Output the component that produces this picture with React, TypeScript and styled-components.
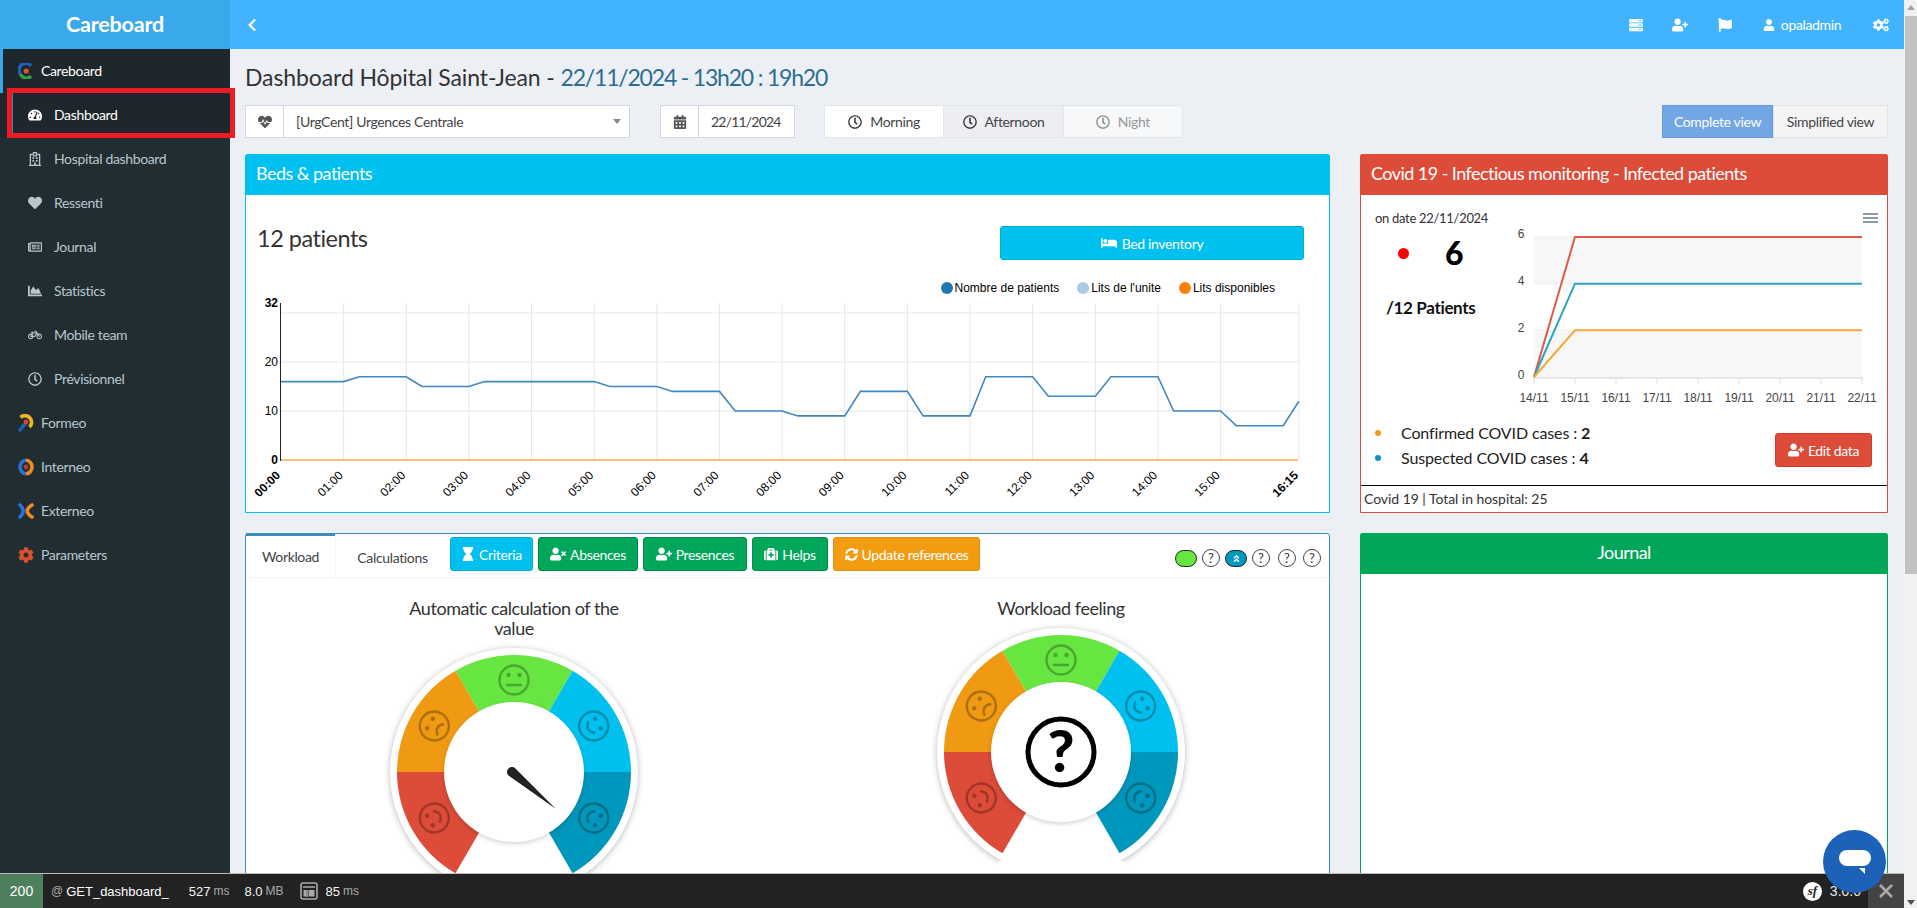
import React from "react";
import styled, { createGlobalStyle } from "styled-components";
import {
  FaAngleDoubleUp, FaBed, FaBicycle, FaCalendarAlt, FaChartArea, FaChevronLeft, FaCog, FaCogs, FaFlag,
  FaHeart, FaHeartbeat, FaHourglass, FaMedkit, FaRegClock, FaRegHospital, FaRegNewspaper,
  FaServer, FaSyncAlt, FaTachometerAlt, FaUser, FaUserPlus, FaUserTimes,
} from "react-icons/fa";

const SANS = `"Lato", "Noto Sans", sans-serif`;
const ARIAL = `"Liberation Sans", Arial, sans-serif`;

const Global = createGlobalStyle`
  html, body { margin: 0; padding: 0; height: 100%; overflow: hidden; }
  body { font-family: ${SANS}; font-size: 14px; color: #333; background: #ecf0f5; letter-spacing: -0.35px; }
  #root { height: 100%; }
  * { box-sizing: border-box; }
`;

const Page = styled.div`position: relative; display: flex; width: 100%; height: 908px; overflow: hidden;`;
const Viewport = styled.div`flex: 1; min-width: 0; display: flex; flex-direction: column;`;
const ScrollTrack = styled.div`width: 13px; background: #f1f1f1; display: flex; flex-direction: column; align-items: stretch; padding-top: 5px;`;
const ScrollArrow = styled.div<{ $down?: boolean }>`
  width: 0; height: 0; align-self: center; border-left: 4px solid transparent; border-right: 4px solid transparent;
  ${(p) => (p.$down ? "border-top: 5px solid #505050; margin-top: auto; margin-bottom: 3px;" : "border-bottom: 5px solid #a3a3a3;")}
`;
const ScrollThumb = styled.div`height: 558px; margin: 6px 0 0 1px; background: #c1c1c1;`;

const TopBar = styled.header`height: 49px; display: flex; background: #42b4ff; color: #fff; flex: none;`;
const Logo = styled.div`width: 230px; background: #3aa9ec; text-align: center; font-size: 21.5px; font-weight: 700; line-height: 49px; letter-spacing: -0.2px;`;
const Toggle = styled.div`width: 40px; display: flex; align-items: center; padding-left: 15px; font-size: 14px;`;
const TopActions = styled.div`margin-left: auto; display: flex; align-items: center; padding-right: 4px; font-size: 14px;`;
const TopAction = styled.span<{ $w: number }>`display: flex; align-items: center; justify-content: center; gap: 6px; width: ${(p) => p.$w}px; font-size: 14px;`;

const Body = styled.div`flex: 1; display: flex; min-height: 0;`;
const Sidebar = styled.nav`width: 230px; flex: none; background: #222d32; color: #b8c7ce;`;
const MenuRow = styled.div<{ $sub?: boolean; $active?: boolean; $brand?: boolean }>`
  height: 44px; display: flex; align-items: center; font-size: 14px; padding-bottom: 1px;
  padding-left: ${(p) => (p.$sub ? "28px" : "18px")};
  background: ${(p) => (p.$active ? "#1e282c" : "transparent")};
  color: ${(p) => (p.$active ? "#fff" : "#b8c7ce")};
  ${(p) => (p.$brand ? "border-left: 3px solid #3aa9ec; padding-left: 15px;" : "")}
  ${(p) => (p.$active && p.$sub ? "background: linear-gradient(to right, transparent 12px, #3c8dbc 12px, #3c8dbc 13px, transparent 13px), #1e282c;" : "")}
`;
const MenuIcon = styled.span<{ $sub?: boolean }>`
  width: ${(p) => (p.$sub ? "26px" : "23px")}; flex: none; display: flex; align-items: center; font-size: 14px;
`;
const Marker = styled.div`
  position: absolute; left: 7px; top: 88px; width: 228px; height: 50px; border: 5px solid #ed1c24; pointer-events: none;
`;

const Content = styled.main`flex: 1; min-width: 0; padding: 15px 16px 0 15px; overflow: hidden;`;
const Title = styled.h1`margin: 0 0 15px; font-size: 23px; line-height: 26px; font-weight: 400; color: #333; letter-spacing: -0.1px;`;
const TitleDate = styled.span`color: #2c6e8f; letter-spacing: -1.2px;`;

const Filters = styled.div`display: flex; height: 33px; margin-bottom: 16px;`;
const InputGroup = styled.div<{ $w: number; $ml?: number }>`
  display: flex; width: ${(p) => p.$w}px; margin-left: ${(p) => p.$ml || 0}px; border: 1px solid #d2d6de; background: #fff;
`;
const Addon = styled.div`width: 38px; flex: none; display: flex; align-items: center; justify-content: center; border-right: 1px solid #d2d6de; font-size: 14px; color: #555;`;
const Field = styled.div`flex: 1; display: flex; align-items: center; padding-left: 12px; padding-right: 8px; color: #444; font-size: 14px;`;
const DateField = styled(Field)`letter-spacing: -0.8px;`;
const Caret = styled.i`
  margin-left: auto; width: 0; height: 0; border-left: 4px solid transparent; border-right: 4px solid transparent; border-top: 5px solid #888;
`;
const ShiftGroup = styled.div`display: flex; margin-left: 30px; width: 358px;`;
const ShiftButton = styled.div<{ $tone: "on" | "mid" | "off" }>`
  flex: 1; display: flex; align-items: center; justify-content: center; gap: 8px; font-size: 14px;
  border: 1px solid #e2e5ea; margin-left: -1px;
  background: ${(p) => (p.$tone === "on" ? "#fff" : p.$tone === "mid" ? "#eceef2" : "#f6f8fa")};
  color: ${(p) => (p.$tone === "off" ? "#999" : "#444")};
  svg { color: ${(p) => (p.$tone === "off" ? "#888" : "#333")}; }
  &:last-child { border-radius: 0 3px 3px 0; }
`;
const ViewGroup = styled.div`display: flex; margin-left: auto;`;
const ViewButton = styled.div<{ $on?: boolean; $w: number }>`
  width: ${(p) => p.$w}px; display: flex; align-items: center; justify-content: center; font-size: 14px;
  background: ${(p) => (p.$on ? "#72a6e4" : "#f4f4f4")}; color: ${(p) => (p.$on ? "#fff" : "#444")};
  border: 1px solid ${(p) => (p.$on ? "#6699d6" : "#e4e4e4")};
`;

const PanelGrid = styled.div`display: grid; grid-template-columns: 1085px 528px; column-gap: 30px; row-gap: 20px; grid-template-rows: 359px 420px;`;
const Panel = styled.section<{ $color: string }>`
  display: flex; flex-direction: column; min-width: 0; background: #fff; border: 1px solid ${(p) => p.$color}; border-radius: 3px 3px 0 0;
`;
const PanelHead = styled.div<{ $color: string; $center?: boolean }>`
  flex: none; height: 41px; margin: -1px -1px 0; padding-left: 11px; background: ${(p) => p.$color}; color: #fff;
  font-size: 18px; line-height: 38px; border-radius: 3px 3px 0 0; letter-spacing: -0.55px;
  ${(p) => (p.$center ? "text-align: center; padding-left: 0;" : "")}
`;

const BedsTop = styled.div`display: flex; align-items: flex-start; justify-content: space-between; margin-top: 31px; padding: 0 25px 0 11px; height: 34px;`;
const PatientCount = styled.div`font-size: 23.5px; line-height: 26px; margin-top: -1px; color: #333; letter-spacing: -0.5px;`;
const InfoButton = styled.div`
  width: 304px; height: 34px; display: flex; align-items: center; justify-content: center; gap: 5px;
  background: #00c0ef; border: 1px solid #00acd6; border-radius: 3px; color: #fff; font-size: 14px;
`;
const Legend = styled.div`display: flex; justify-content: flex-end; gap: 18px; padding-right: 54px; margin-top: 20px; margin-bottom: 1px; height: 15px; font: 12px/14px ${ARIAL}; color: #000; letter-spacing: 0;`;
const LegendItem = styled.span`display: flex; align-items: center; gap: 2px;`;
const LegendDot = styled.i<{ $color: string }>`width: 12px; height: 12px; border-radius: 50%; background: ${(p) => p.$color};`;
const ChartSvg = styled.svg<{ $w: number; $h: number }>`display: block; flex: none; width: ${(p) => p.$w}px; height: ${(p) => p.$h}px;`;
const AxisLabel = styled.text<{ $bold?: boolean; $fill?: string }>`
  font: ${(p) => (p.$bold ? "700" : "400")} 12px ${ARIAL}; letter-spacing: 0; fill: ${(p) => p.$fill || "#000"};
`;

const CovidTop = styled.div`display: flex; flex: none;`;
const CovidInfo = styled.div`width: 144px; flex: none; padding-top: 13px;`;
const OnDate = styled.div`font-size: 13px; line-height: 20px; padding-left: 14px; letter-spacing: -0.3px;`;
const CountRow = styled.div`display: flex; align-items: center; height: 40px; margin-top: 5px; padding-left: 37px; gap: 36px;`;
const RedDot = styled.i`width: 11px; height: 11px; border-radius: 50%; background: #f00;`;
const BigCount = styled.b`font-size: 32px; line-height: 40px; color: #000; font-weight: 900;`;
const OfPatients = styled.div`margin-top: 24px; padding-left: 25px; font-size: 17px; line-height: 22px; font-weight: 700; color: #111; white-space: nowrap; letter-spacing: -0.35px;`;
const CovidBottom = styled.div`display: flex; align-items: center; justify-content: space-between; padding: 0 15px 0 14px; height: 50px;`;
const CaseList = styled.div`display: flex; flex-direction: column;`;
const CaseRow = styled.div`display: flex; align-items: center; font-size: 16px; line-height: 25px; color: #222; letter-spacing: -0.12px; b { margin-left: 4px; }`;
const CaseDot = styled.i<{ $color: string }>`width: 6px; height: 6px; border-radius: 50%; background: ${(p) => p.$color}; margin-right: 20px;`;
const ActionButton = styled.div<{ $bg: string; $border: string; $w: number; $mt?: number }>`
  width: ${(p) => p.$w}px; height: 34px; flex: none; display: flex; align-items: center; justify-content: center; gap: 4px;
  margin-top: ${(p) => p.$mt || 0}px;
  background: ${(p) => p.$bg}; border: 1px solid ${(p) => p.$border}; border-radius: 3px; color: #fff; font-size: 14px; white-space: nowrap;
`;
const CovidFoot = styled.div`margin-top: auto; height: 27px; border-top: 1px solid #000; padding-left: 3px; font-size: 14px; line-height: 26px; color: #333; letter-spacing: -0.05px;`;

const TabBar = styled.div`display: flex; align-items: flex-start; height: 44px; border-bottom: 1px solid #f4f4f4; flex: none;`;
const ActiveTab = styled.div`width: 89px; height: 44px; margin-top: -1px; border-top: 3px solid #3c8dbc; background: #fff; text-align: center; line-height: 42px; color: #444; font-size: 14px;`;
const Tab = styled.div`width: 114px; height: 43px; border-left: 1px solid #f4f4f4; text-align: center; line-height: 48px; color: #444; font-size: 14px;`;
const TabActions = styled.div`display: flex; gap: 5px; padding-top: 3px; margin-left: 1px;`;
const StatusGroup = styled.div`display: flex; align-items: center; margin-left: auto; padding: 15px 8px 0 0;`;
const StatusPill = styled.span<{ $color: string; $ml: number }>`
  width: 22px; height: 17px; margin-left: ${(p) => p.$ml}px; border-radius: 9px; background: ${(p) => p.$color}; border: 1px solid #222;
  display: flex; align-items: center; justify-content: center; color: #fff; font-size: 9px;
`;
const StatusHelp = styled.span<{ $ml: number }>`
  width: 18px; height: 18px; margin-left: ${(p) => p.$ml}px; border-radius: 50%; border: 1.5px solid #444;
  display: flex; align-items: center; justify-content: center; font-size: 13px; line-height: 1; color: #333; letter-spacing: 0;
`;
const GaugeRow = styled.div`display: grid; grid-template-columns: 536px 536px; column-gap: 11px; padding-top: 20px;`;
const GaugeCol = styled.div`display: flex; flex-direction: column; align-items: center;`;
const GaugeTitle = styled.div`max-width: 232px; text-align: center; font-size: 18px; line-height: 20px; color: #333; letter-spacing: -0.45px;`;
const Rim = styled.circle`fill: #fff; filter: drop-shadow(0 1px 3px rgba(0, 0, 0, 0.28));`;
const Hub = styled.circle`fill: #fff; filter: drop-shadow(0 2px 2px rgba(0, 0, 0, 0.16));`;
const QuestionMark = styled.text`font: 900 58px ${SANS}; letter-spacing: 0; fill: #000;`;

const DebugBar = styled.footer`
  position: absolute; left: 0; right: 13px; bottom: 0; height: 35px; display: flex; align-items: center; background: #222;
  border-top: 1px solid #bbb; color: #f5f5f5; font: 13px ${ARIAL}; letter-spacing: 0; z-index: 2;
`;
const DebugStatus = styled.div`width: 43px; height: 100%; display: flex; align-items: center; justify-content: center; background: #4f805d; color: #fff; font-size: 14px;`;
const DebugItem = styled.div<{ $ml: number }>`display: flex; align-items: center; gap: 3px; margin-left: ${(p) => p.$ml}px; white-space: nowrap;`;
const Muted = styled.span`color: #aaa; font-size: 12px;`;
const DebugRoute = styled.b`font-weight: 400; color: #fff;`;
const SfBadge = styled.i`
  width: 19px; height: 19px; border-radius: 50%; background: #fff; color: #222; margin-left: auto;
  display: flex; align-items: center; justify-content: center; font: italic 700 13px "Liberation Serif", serif;
`;
const DebugVersion = styled.span`margin-left: 8px; color: #e8e8e8; font-size: 14px;`;
const DebugClose = styled.div`margin-left: 7px; width: 36px; height: 100%; background: #444; color: #999; display: flex; align-items: center; justify-content: center;`;
const ChatButton = styled.div`
  position: absolute; right: 31px; bottom: 15px; width: 63px; height: 63px; border-radius: 50%; background: #1c62b9;
  display: flex; align-items: center; justify-content: center; z-index: 3;
`;

const BrandLogo = ({ kind }: { kind: "care" | "formeo" | "interneo" | "externeo" }) => {
  if (kind === "care")
    return (
      <svg width="16" height="16" viewBox="0 0 16 16">
        <path d="M13 3A6.3 6.3 0 0 0 2.4 11" fill="none" stroke="#1c62b9" strokeWidth="3.4" />
        <path d="M2.4 11A6.3 6.3 0 0 0 13 13" fill="none" stroke="#33a04a" strokeWidth="3.4" />
        <circle cx="8.2" cy="8" r="2.6" fill="#e0562a" />
      </svg>
    );
  if (kind === "formeo")
    return (
      <svg width="16" height="18" viewBox="0 0 16 18">
        <path d="M2.5 3.4A5.8 5.8 0 0 1 11.5 13" fill="none" stroke="#f0b429" strokeWidth="3.6" />
        <path d="M2 16L8 8.5" stroke="#1c62b9" strokeWidth="3.4" strokeLinecap="round" />
        <circle cx="8" cy="8" r="2.4" fill="#d9472b" />
      </svg>
    );
  if (kind === "interneo")
    return (
      <svg width="16" height="18" viewBox="0 0 16 18">
        <path d="M8 2.2A6 6.8 0 0 0 8 15.8" fill="none" stroke="#2a72d8" strokeWidth="3.6" />
        <path d="M8 2.2A6 6.8 0 0 1 8 15.8" fill="none" stroke="#f08a24" strokeWidth="3.6" />
        <circle cx="8" cy="9" r="2.4" fill="#b8402a" />
      </svg>
    );
  return (
    <svg width="16" height="18" viewBox="0 0 16 18">
      <path d="M2 3Q8.5 9 2 15" fill="none" stroke="#2a72d8" strokeWidth="3.6" strokeLinecap="round" />
      <path d="M14 3Q4.5 9 14 15" fill="none" stroke="#f08a24" strokeWidth="3.6" strokeLinecap="round" />
    </svg>
  );
};

type Menu = { label: string; icon: React.ReactNode; sub?: boolean; active?: boolean; brand?: boolean };
const MENU: Menu[] = [
  { label: "Careboard", icon: <BrandLogo kind="care" />, active: true, brand: true },
  { label: "Dashboard", icon: <FaTachometerAlt />, sub: true, active: true },
  { label: "Hospital dashboard", icon: <FaRegHospital />, sub: true },
  { label: "Ressenti", icon: <FaHeart />, sub: true },
  { label: "Journal", icon: <FaRegNewspaper />, sub: true },
  { label: "Statistics", icon: <FaChartArea />, sub: true },
  { label: "Mobile team", icon: <FaBicycle />, sub: true },
  { label: "Prévisionnel", icon: <FaRegClock />, sub: true },
  { label: "Formeo", icon: <BrandLogo kind="formeo" /> },
  { label: "Interneo", icon: <BrandLogo kind="interneo" /> },
  { label: "Externeo", icon: <BrandLogo kind="externeo" /> },
  { label: "Parameters", icon: <FaCog color="#d9512c" size={16} /> },
];

const BED_POINTS: [number, number][] = [
  [0, 16], [1, 16], [1.25, 17], [2, 17], [2.25, 15], [3, 15], [3.25, 16], [5, 16], [5.25, 15], [6, 15], [6.25, 14],
  [7, 14], [7.25, 10], [8, 10], [8.25, 9], [9, 9], [9.25, 14], [10, 14], [10.25, 9], [11, 9], [11.25, 17], [12, 17],
  [12.25, 13], [13, 13], [13.25, 17], [14, 17], [14.25, 10], [15, 10], [15.25, 7], [16, 7], [16.25, 12],
];
const bedX = (h: number) => 281 + 62.64 * h;
const bedY = (v: number) => 460 - 4.9 * v;

const BedChart = () => {
  const hours = Array.from({ length: 16 }, (_, i) => i);
  return (
    <ChartSvg $w={1083} $h={215} viewBox="246 296 1083 215">
      {[10, 20, 30].map((v) => (
        <line key={v} x1="281" x2="1298" y1={bedY(v)} y2={bedY(v)} stroke="#e6e6e6" />
      ))}
      {[...hours.slice(1), 16.25].map((h) => (
        <line key={h} x1={bedX(h)} x2={bedX(h)} y1="303" y2="460" stroke="#e6e6e6" />
      ))}
      <line x1="280.5" x2="280.5" y1="303" y2="461" stroke="#222" />
      <polyline fill="none" stroke="#3f88bf" strokeWidth="1.6" points={BED_POINTS.map(([h, v]) => `${bedX(h)},${bedY(v)}`).join(" ")} />
      <line x1="281" x2="1298" y1="460" y2="460" stroke="#ff7f0e" strokeWidth="1.2" />
      <AxisLabel $bold x="278" y="307" textAnchor="end">32</AxisLabel>
      <AxisLabel x="278" y="366" textAnchor="end">20</AxisLabel>
      <AxisLabel x="278" y="415" textAnchor="end">10</AxisLabel>
      <AxisLabel $bold x="278" y="464" textAnchor="end">0</AxisLabel>
      {hours.map((h) => {
        const x = bedX(h);
        return (
          <AxisLabel key={h} $bold={h === 0} x={x} y="476" textAnchor="end" transform={`rotate(-45 ${x} 476)`}>
            {`${String(h).padStart(2, "0")}:00`}
          </AxisLabel>
        );
      })}
      <AxisLabel $bold x={bedX(16.25)} y="476" textAnchor="end" transform={`rotate(-45 ${bedX(16.25)} 476)`}>16:15</AxisLabel>
    </ChartSvg>
  );
};

const covidX = (i: number) => 1534 + 41 * i;
const covidY = (v: number) => 377 - 23.33 * v;
const DATES = ["14/11", "15/11", "16/11", "17/11", "18/11", "19/11", "20/11", "21/11", "22/11"];

const CovidChart = () => (
  <ChartSvg $w={380} $h={225} viewBox="1505 195 380 225">
    <rect x="1534" y={covidY(6)} width="328" height={covidY(4) - covidY(6)} fill="#f7f7f7" />
    <rect x="1534" y={covidY(2)} width="328" height={covidY(0) - covidY(2)} fill="#f7f7f7" />
    {[2, 4, 6].map((v) => (
      <line key={v} x1="1534" x2="1862" y1={covidY(v)} y2={covidY(v)} stroke="#eee" />
    ))}
    <line x1="1534" x2="1862" y1="378" y2="378" stroke="#e6e6e6" strokeWidth="2" />
    {DATES.map((d, i) => (
      <line key={d} x1={covidX(i)} x2={covidX(i)} y1="377" y2="384" stroke="#e0e0e0" />
    ))}
    {[[6, "#e0584a"], [4, "#2ba4c4"], [2, "#f5a83a"]].map(([v, c]) => (
      <polyline key={String(v)} fill="none" stroke={String(c)} strokeWidth="2"
        points={`1534,${covidY(0)} 1575,${covidY(Number(v))} 1862,${covidY(Number(v))}`} />
    ))}
    {[[6, 238], [4, 285], [2, 332], [0, 379]].map(([v, y]) => (
      <AxisLabel key={v} $fill="#444" x="1521" y={y} textAnchor="middle">{v}</AxisLabel>
    ))}
    {DATES.map((d, i) => (
      <AxisLabel key={d} $fill="#444" x={covidX(i)} y="402" textAnchor="middle">{d}</AxisLabel>
    ))}
    {[214, 218, 222].map((y) => (
      <line key={y} x1="1863" x2="1878" y1={y} y2={y} stroke="#66788a" strokeWidth="1.5" />
    ))}
  </ChartSvg>
);

const polar = (r: number, deg: number) => {
  const a = ((deg - 90) * Math.PI) / 180;
  return [r * Math.cos(a), r * Math.sin(a)];
};
const sector = (from: number, to: number) => {
  const [a, b] = polar(117, from);
  const [c, d] = polar(117, to);
  const [e, f] = polar(60, to);
  const [g, h] = polar(60, from);
  return `M${a} ${b}A117 117 0 0 1 ${c} ${d}L${e} ${f}L${g} ${h}Z`;
};

const SMILE = "M-6 3Q0 10 6 3";
const FROWN = "M-6 7Q0 0 6 7";
const FACES = [
  { from: -150, to: -90, color: "#dd4b39", rot: -120, mouth: SMILE },
  { from: -90, to: -30, color: "#ef9a12", rot: -60, mouth: FROWN },
  { from: -30, to: 30, color: "#67e540", rot: 0, mouth: "M-7 5H7" },
  { from: 30, to: 90, color: "#00c0ef", rot: 60, mouth: SMILE },
  { from: 90, to: 150, color: "#0097bc", rot: 120, mouth: SMILE },
];

const Gauge = ({ unknown }: { unknown?: boolean }) => (
  <ChartSvg $w={260} $h={276} viewBox="-130 -134 260 276">
    <Rim r="124" />
    {FACES.map((f) => (
      <g key={f.rot}>
        <path d={sector(f.from, f.to)} fill={f.color} />
        <g transform={`rotate(${f.rot}) translate(0 -92)`} fill="none" stroke="rgba(0,0,0,.28)" strokeWidth="2.4">
          <circle r="14.5" />
          <path d={f.mouth} strokeLinecap="round" />
          <circle cx="-5.5" cy="-5" r="2.2" fill="rgba(0,0,0,.28)" stroke="none" />
          <circle cx="5.5" cy="-5" r="2.2" fill="rgba(0,0,0,.28)" stroke="none" />
        </g>
      </g>
    ))}
    <rect x="-63" y="109" width="126" height="40" fill="#fff" />
    <Hub r="70" />
    {unknown ? (
      <>
        <circle r="33" fill="none" stroke="#000" strokeWidth="5" />
        <QuestionMark y="20" textAnchor="middle">?</QuestionMark>
      </>
    ) : (
      <path transform="translate(-2 0) rotate(40)" d="M0 -5L57 0L0 5A5 5 0 0 1 0 -5Z" fill="#222" />
    )}
  </ChartSvg>
);

export default function App() {
  return (
    <Page>
      <Global />
      <Viewport>
        <TopBar>
          <Logo>Careboard</Logo>
          <Toggle><FaChevronLeft /></Toggle>
          <TopActions>
            <TopAction $w={32}><FaServer /></TopAction>
            <TopAction $w={56}><FaUserPlus size={16} /></TopAction>
            <TopAction $w={34}><FaFlag /></TopAction>
            <TopAction $w={120}><FaUser size={12} /> opaladmin</TopAction>
            <TopAction $w={38}><FaCogs size={16} /></TopAction>
          </TopActions>
        </TopBar>
        <Body>
          <Sidebar>
            {MENU.map((m) => (
              <MenuRow key={m.label} $sub={m.sub} $active={m.active} $brand={m.brand}>
                <MenuIcon $sub={m.sub}>{m.icon}</MenuIcon>
                {m.label}
              </MenuRow>
            ))}
          </Sidebar>
          <Content>
            <Title>
              Dashboard Hôpital Saint-Jean - <TitleDate>22/11/2024 - 13h20 : 19h20</TitleDate>
            </Title>
            <Filters>
              <InputGroup $w={385}>
                <Addon><FaHeartbeat /></Addon>
                <Field>[UrgCent] Urgences Centrale<Caret /></Field>
              </InputGroup>
              <InputGroup $w={135} $ml={30}>
                <Addon><FaCalendarAlt /></Addon>
                <DateField>22/11/2024</DateField>
              </InputGroup>
              <ShiftGroup>
                <ShiftButton $tone="on"><FaRegClock />Morning</ShiftButton>
                <ShiftButton $tone="mid"><FaRegClock />Afternoon</ShiftButton>
                <ShiftButton $tone="off"><FaRegClock />Night</ShiftButton>
              </ShiftGroup>
              <ViewGroup>
                <ViewButton $on $w={111}>Complete view</ViewButton>
                <ViewButton $w={115}>Simplified view</ViewButton>
              </ViewGroup>
            </Filters>
            <PanelGrid>
              <Panel $color="#00c0ef">
                <PanelHead $color="#00c0ef">Beds &amp; patients</PanelHead>
                <BedsTop>
                  <PatientCount>12 patients</PatientCount>
                  <InfoButton><FaBed size={16} />Bed inventory</InfoButton>
                </BedsTop>
                <Legend>
                  <LegendItem><LegendDot $color="#1f77b4" />Nombre de patients</LegendItem>
                  <LegendItem><LegendDot $color="#aec7e8" />Lits de l'unite</LegendItem>
                  <LegendItem><LegendDot $color="#ff7f0e" />Lits disponibles</LegendItem>
                </Legend>
                <BedChart />
              </Panel>
              <Panel $color="#dd4b39">
                <PanelHead $color="#dd4b39">Covid 19 - Infectious monitoring - Infected patients</PanelHead>
                <CovidTop>
                  <CovidInfo>
                    <OnDate>on date 22/11/2024</OnDate>
                    <CountRow><RedDot /><BigCount>6</BigCount></CountRow>
                    <OfPatients>/12 Patients</OfPatients>
                  </CovidInfo>
                  <CovidChart />
                </CovidTop>
                <CovidBottom>
                  <CaseList>
                    <CaseRow><CaseDot $color="#f39c12" />Confirmed COVID cases : <b>2</b></CaseRow>
                    <CaseRow><CaseDot $color="#0097bc" />Suspected COVID cases : <b>4</b></CaseRow>
                  </CaseList>
                  <ActionButton $bg="#dd4b39" $border="#d73925" $w={97} $mt={10}><FaUserPlus size={16} />Edit data</ActionButton>
                </CovidBottom>
                <CovidFoot>Covid 19 | Total in hospital: 25</CovidFoot>
              </Panel>
              <Panel $color="#3c8dbc">
                <TabBar>
                  <ActiveTab>Workload</ActiveTab>
                  <Tab>Calculations</Tab>
                  <TabActions>
                    <ActionButton $bg="#00c0ef" $border="#00acd6" $w={83}><FaHourglass size={14} />Criteria</ActionButton>
                    <ActionButton $bg="#00a65a" $border="#008d4c" $w={100}><FaUserTimes size={16} />Absences</ActionButton>
                    <ActionButton $bg="#00a65a" $border="#008d4c" $w={104}><FaUserPlus size={16} />Presences</ActionButton>
                    <ActionButton $bg="#00a65a" $border="#008d4c" $w={76}><FaMedkit size={14} />Helps</ActionButton>
                    <ActionButton $bg="#f39c12" $border="#e08e0b" $w={147}><FaSyncAlt size={13} />Update references</ActionButton>
                  </TabActions>
                  <StatusGroup>
                    <StatusPill $color="#67e540" $ml={0} />
                    <StatusHelp $ml={5}>?</StatusHelp>
                    <StatusPill $color="#0097bc" $ml={5}><FaAngleDoubleUp /></StatusPill>
                    <StatusHelp $ml={5}>?</StatusHelp>
                    <StatusHelp $ml={8}>?</StatusHelp>
                    <StatusHelp $ml={7}>?</StatusHelp>
                  </StatusGroup>
                </TabBar>
                <GaugeRow>
                  <GaugeCol>
                    <GaugeTitle>Automatic calculation of the value</GaugeTitle>
                    <Gauge />
                  </GaugeCol>
                  <GaugeCol>
                    <GaugeTitle>Workload feeling</GaugeTitle>
                    <Gauge unknown />
                  </GaugeCol>
                </GaugeRow>
              </Panel>
              <Panel $color="#00a65a">
                <PanelHead $color="#00a65a" $center>Journal</PanelHead>
              </Panel>
            </PanelGrid>
          </Content>
        </Body>
      </Viewport>
      <ScrollTrack>
        <ScrollArrow />
        <ScrollThumb />
        <ScrollArrow $down />
      </ScrollTrack>
      <Marker />
      <DebugBar>
        <DebugStatus>200</DebugStatus>
        <DebugItem $ml={8}><Muted>@</Muted><DebugRoute>GET_dashboard_</DebugRoute></DebugItem>
        <DebugItem $ml={20}>527 <Muted>ms</Muted></DebugItem>
        <DebugItem $ml={15}>8.0 <Muted>MB</Muted></DebugItem>
        <DebugItem $ml={16}>
          <svg width="18" height="18" viewBox="0 0 18 18" fill="none" stroke="#aaa" strokeWidth="1.6">
            <rect x="1" y="1" width="16" height="16" rx="2" />
            <path d="M3 5H15M7 8V15" />
            <rect x="3.5" y="8" width="2.5" height="6.5" fill="#aaa" stroke="none" />
            <rect x="8.5" y="8" width="6" height="6.5" fill="#aaa" stroke="none" />
          </svg>
        </DebugItem>
        <DebugItem $ml={8}>85 <Muted>ms</Muted></DebugItem>
        <SfBadge>sf</SfBadge>
        <DebugVersion>3.0.0</DebugVersion>
        <DebugClose>
          <svg width="14" height="14" viewBox="0 0 14 14"><path d="M1 1L13 13M13 1L1 13" stroke="#aaa" strokeWidth="2.6" /></svg>
        </DebugClose>
      </DebugBar>
      <ChatButton>
        <svg width="32" height="26" viewBox="0 0 32 26">
          <rect y="1" width="32" height="16" rx="8" fill="#fff" />
          <path d="M20 19H26V25Z" fill="#fff" />
        </svg>
      </ChatButton>
    </Page>
  );
}
